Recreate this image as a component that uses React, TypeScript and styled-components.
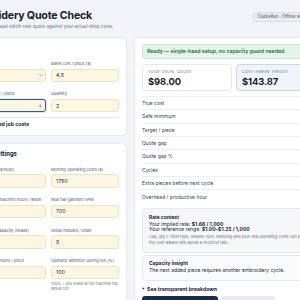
import React from 'react';
import styled, { createGlobalStyle } from 'styled-components';

const GlobalStyle = createGlobalStyle`
  html, body {
    margin: 0;
    padding: 0;
    background: #f3f4f7;
    overflow: hidden;
  }
  body {
    font-family: Inter, "Noto Sans", sans-serif;
    color: #1f2937;
  }
`;

const Page = styled.div`
  padding-top: 9px;
`;

const Shell = styled.div`
  width: 373px;
  margin-left: -30px;
`;

const Header = styled.header`
  display: flex;
  justify-content: space-between;
  align-items: flex-start;
`;

const Title = styled.h1`
  margin: 0 0 0 -4px;
  font-size: 10.6px;
  line-height: 13px;
  font-weight: 700;
  letter-spacing: -0.015em;
  color: #172033;
`;

const Subtitle = styled.p`
  margin: 2px 0 0;
  font-size: 4.6px;
  line-height: 6px;
  color: #667085;
`;

const Badge = styled.span`
  margin-top: 2.7px;
  padding: 1.5px 4px;
  border-radius: 6px;
  background: #e9ecf1;
  border: 0.5px solid #d9dde4;
  font-size: 4.3px;
  line-height: 5px;
  color: #3b4452;
  white-space: nowrap;
`;

const Main = styled.main`
  display: grid;
  grid-template-columns: 157px 1fr;
  gap: 7px;
  margin-top: 7px;
  align-items: start;
`;

const Column = styled.div`
  display: flex;
  flex-direction: column;
  gap: 7px;
`;

const Card = styled.section`
  background: #fff;
  border: 0.5px solid #e5e7eb;
  border-radius: 5px;
  padding: 6px 7px 8px;
`;

const CardHead = styled.div`
  display: flex;
  align-items: center;
  justify-content: space-between;
  margin-bottom: 10px;
`;

const CardTitle = styled.h2`
  margin: 0;
  font-size: 5.8px;
  line-height: 7px;
  font-weight: 700;
  color: #172033;
`;

const Fields = styled.div`
  display: grid;
  grid-template-columns: 1fr 1fr;
  column-gap: 5px;
  row-gap: 9.7px;
`;

const Field = styled.label`
  display: flex;
  flex-direction: column;
  min-width: 0;
`;

const Label = styled.span`
  font-size: 4px;
  line-height: 5px;
  color: #4b5563;
  white-space: nowrap;
  margin-bottom: 2.5px;
`;

const InputBox = styled.div<{ $focus?: boolean }>`
  display: flex;
  align-items: center;
  justify-content: space-between;
  height: 13.3px;
  box-sizing: border-box;
  padding: 0 3.5px 0 4px;
  border-radius: 3px;
  background: #fdf6e2;
  border: ${({ $focus }) => ($focus ? '0.8px solid #3d5a80' : '0.5px solid #ece2c4')};
  box-shadow: ${({ $focus }) => ($focus ? '0 0 0 1px rgba(61, 90, 128, 0.15)' : 'none')};
  font-size: 5.3px;
  color: #1f2937;
`;

const Hint = styled.span`
  margin-top: 1.5px;
  font-size: 3.8px;
  line-height: 5.7px;
  color: #6b7280;
`;

const Divider = styled.hr`
  border: 0;
  border-top: 0.5px solid #e6e8ec;
  margin: 4.5px 0 3px;
`;

const Toggle = styled.div`
  display: flex;
  align-items: center;
  gap: 2px;
  font-size: 5.2px;
  line-height: 6px;
  font-weight: 700;
  color: #172033;
`;

const Banner = styled.div`
  padding: 4px;
  border-radius: 3px;
  background: #e5f3e8;
  border: 0.5px solid #cfe8d5;
  font-size: 5.2px;
  line-height: 5px;
  font-weight: 600;
  color: #1f6b36;
  white-space: nowrap;
`;

const Metrics = styled.div`
  display: grid;
  grid-template-columns: 90px 1fr;
  gap: 4px;
  margin-top: 5px;
`;

const Metric = styled.div<{ $accent?: boolean }>`
  padding: 4px 5px 3.5px;
  border-radius: 4px;
  background: ${({ $accent }) => ($accent ? '#f0f4fa' : '#ffffff')};
  border: ${({ $accent }) => ($accent ? '0.7px solid #cdd6e4' : '0.5px solid #e5e7eb')};
`;

const MetricLabel = styled.div`
  font-size: 3.8px;
  line-height: 5px;
  letter-spacing: 0.08em;
  text-transform: uppercase;
  color: #6b7280;
  margin-bottom: 1.5px;
`;

const MetricValue = styled.div`
  font-size: 9.4px;
  line-height: 11px;
  font-weight: 700;
  letter-spacing: -0.01em;
  color: #172033;
`;

const Rows = styled.div`
  margin-top: 5px;
  border-top: 0.5px solid #eceef1;
`;

const Row = styled.div`
  display: flex;
  align-items: center;
  justify-content: space-between;
  height: 13.33px;
  box-sizing: border-box;
  border-bottom: 0.5px solid #eceef1;
  font-size: 5px;
  color: #374151;

  &:last-child {
    border-bottom: 0;
  }
`;

const RowValue = styled.span`
  font-weight: 600;
  color: #172033;
`;

const InfoBox = styled.div<{ $tint?: boolean }>`
  margin-top: ${({ $tint }) => ($tint ? '4px' : '2.5px')};
  padding: ${({ $tint }) => ($tint ? '5.5px 6px 6.5px' : '4px 6px 7px')};
  border-radius: 4px;
  background: ${({ $tint }) => ($tint ? '#f6f7f9' : '#fafbfc')};
  border: 0.5px solid #e5e7eb;
`;

const InfoTitle = styled.div`
  font-size: 4.9px;
  line-height: 6px;
  font-weight: 700;
  color: #172033;
  margin-bottom: 1.5px;
`;

const InfoLine = styled.div`
  font-size: 5px;
  line-height: 5.5px;
  color: #1f2937;
  white-space: nowrap;

  b {
    font-weight: 700;
  }
`;

const InfoNote = styled.div`
  margin-top: 1.5px;
  font-size: 4px;
  line-height: 5.5px;
  color: #6b7280;
  white-space: nowrap;
`;

const Breakdown = styled(Toggle)`
  margin-top: 4.5px;
`;

const Actions = styled.div`
  display: flex;
  gap: 4px;
  margin-top: 4.5px;
`;

const Button = styled.button<{ $primary?: boolean }>`
  height: 13px;
  padding: 0;
  width: ${({ $primary }) => ($primary ? '76px' : '53px')};
  border-radius: 3px;
  border: 0;
  background: ${({ $primary }) => ($primary ? '#1c2a44' : '#e6ebf3')};
  color: ${({ $primary }) => ($primary ? '#ffffff' : '#1c2a44')};
  font-family: inherit;
  font-size: 5px;
  font-weight: 600;
`;

const Chevron = () => (
  <svg width="3" height="2" viewBox="0 0 6 4" fill="none">
    <path d="M0.8 0.8 L3 3 L5.2 0.8" stroke="#374151" strokeWidth="1" />
  </svg>
);

const Spinner = () => (
  <svg width="2.4" height="4" viewBox="0 0 4 7">
    <path d="M2 0.5 L3.6 2.6 H0.4 Z M2 6.5 L3.6 4.4 H0.4 Z" fill="#374151" />
  </svg>
);

const Caret = () => (
  <svg width="3" height="3" viewBox="0 0 4 4">
    <path d="M0.8 0.4 L3.4 2 L0.8 3.6 Z" fill="#172033" />
  </svg>
);

const rows: [string, string][] = [
  ['True cost', '$71.94'],
  ['Safe minimum', '$107.91'],
  ['Target / piece', '$71.94'],
  ['Quote gap', '−$45.87'],
  ['Quote gap %', '−31.9%'],
  ['Cycles', '2'],
  ['Extra pieces before next cycle', '0'],
  ['Overhead / productive hour', '$12.15'],
];

const shopFields: { label: string; value: string; hint?: string }[] = [
  { label: 'Labor rate ($/hour)', value: '25' },
  { label: 'Monthly operating costs ($)', value: '1750' },
  { label: 'Productive machine hours / week', value: '30' },
  { label: 'Real flat-garment SPM', value: '700' },
  { label: 'Per-cycle capacity (heads)', value: '1' },
  { label: 'Setup minutes / order', value: '5' },
  { label: 'Hooping minutes / piece', value: '2' },
  {
    label: 'Operator attention during run (%)',
    value: '100',
    hint: '100% = you stand at the machine the whole run.',
  },
  { label: 'Backing each ($)', value: '0.25' },
  { label: 'Usual stitch rate ($ / 1,000)', value: '1.25' },
];

export default function App() {
  return (
    <>
      <GlobalStyle />
      <Page>
        <Shell>
          <Header>
            <div>
              <Title>Embroidery Quote Check</Title>
              <Subtitle>Check your usual stitch-rate quote against your actual shop costs.</Subtitle>
            </div>
            <Badge>CodesRun · Offline single-file calculator</Badge>
          </Header>

          <Main>
            <Column>
              <Card>
                <CardHead>
                  <CardTitle>Job</CardTitle>
                </CardHead>
                <Fields>
                  <Field>
                    <Label>Garment</Label>
                    <InputBox>
                      <span>T-shirt</span>
                      <Chevron />
                    </InputBox>
                  </Field>
                  <Field>
                    <Label>Blank cost / piece ($)</Label>
                    <InputBox>4.5</InputBox>
                  </Field>
                  <Field>
                    <Label>Stitch count / piece</Label>
                    <InputBox $focus>
                      <span>8000</span>
                      <Spinner />
                    </InputBox>
                  </Field>
                  <Field>
                    <Label>Quantity</Label>
                    <InputBox>2</InputBox>
                  </Field>
                </Fields>
                <Divider />
                <Toggle>
                  <Caret />
                  Itemized job costs
                </Toggle>
              </Card>

              <Card>
                <CardHead>
                  <CardTitle>Shop settings</CardTitle>
                </CardHead>
                <Fields>
                  {shopFields.map((f) => (
                    <Field key={f.label}>
                      <Label>{f.label}</Label>
                      <InputBox>{f.value}</InputBox>
                      {f.hint && <Hint>{f.hint}</Hint>}
                    </Field>
                  ))}
                </Fields>
              </Card>
            </Column>

            <Card>
              <Banner>Ready — single-head setup, no capacity guard needed.</Banner>
              <Metrics>
                <Metric>
                  <MetricLabel>Your usual quote</MetricLabel>
                  <MetricValue>$98.00</MetricValue>
                </Metric>
                <Metric $accent>
                  <MetricLabel>Cost-aware target</MetricLabel>
                  <MetricValue>$143.87</MetricValue>
                </Metric>
              </Metrics>
              <Rows>
                {rows.map(([label, value]) => (
                  <Row key={label}>
                    <span>{label}</span>
                    <RowValue>{value}</RowValue>
                  </Row>
                ))}
              </Rows>
              <InfoBox $tint>
                <InfoTitle>Rate context</InfoTitle>
                <InfoLine>
                  Your implied rate: <b>$1.66 / 1,000</b>
                </InfoLine>
                <InfoLine>
                  Your reference range: <b>$1.00–$1.25 / 1,000</b>
                </InfoLine>
                <InfoNote>
                  Cap, qty 2: item type, smaller runs, handling and your real operating costs can push
                  <br />
                  the cost-aware rate above a shortcut rate.
                </InfoNote>
              </InfoBox>
              <InfoBox>
                <InfoTitle>Capacity insight</InfoTitle>
                <InfoLine>The next added piece requires another embroidery cycle.</InfoLine>
              </InfoBox>
              <Breakdown>
                <Caret />
                See transparent breakdown
              </Breakdown>
              <Actions>
                <Button $primary>Copy quote summary</Button>
                <Button>Reset</Button>
              </Actions>
            </Card>
          </Main>
        </Shell>
      </Page>
    </>
  );
}
